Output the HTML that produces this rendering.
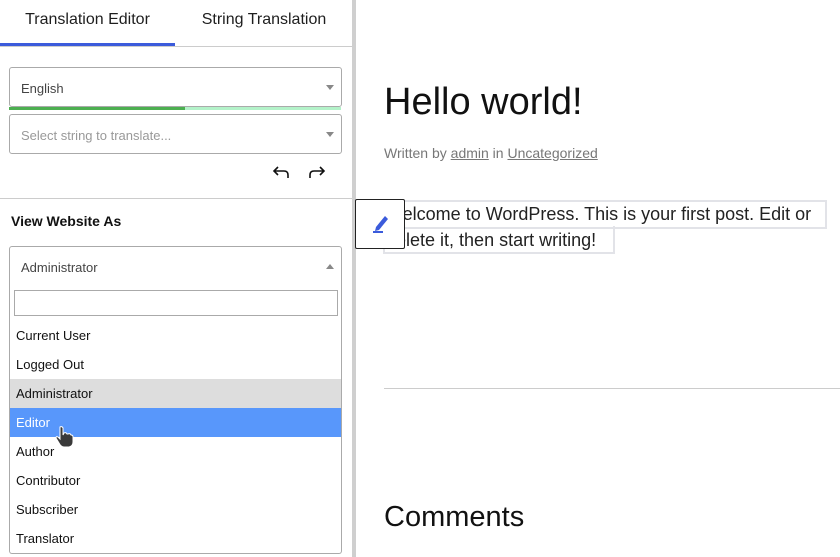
<!DOCTYPE html>
<html><head><meta charset="utf-8">
<style>
*{box-sizing:border-box;margin:0;padding:0}
body{width:840px;height:557px;overflow:hidden;background:#fff;font-family:"Liberation Sans",sans-serif;position:relative;color:#222}
.a{position:absolute}
.sel{position:absolute;left:9px;width:333px;border:1px solid #aaa;border-radius:3px;background:#fff;font-size:13px;color:#444}
.car{position:absolute;right:7px;top:50%;margin-top:-2px;width:0;height:0;border-left:4px solid transparent;border-right:4px solid transparent;border-top:5px solid #888}
.opt{position:absolute;left:0;width:331px;height:29px;line-height:29px;padding-left:6px;font-size:13px;color:#111}
.wp{font-family:"Liberation Sans",sans-serif;color:#111}
</style></head><body>
<div class="a" style="left:352px;top:0;width:4px;height:557px;background:#cfcfcf"></div>
<div class="a" style="left:0;top:11px;width:175px;text-align:center;font-size:16px;color:#1e1e1e">Translation Editor</div>
<div class="a" style="left:176px;top:11px;width:176px;text-align:center;font-size:16px;color:#1e1e1e">String Translation</div>
<div class="a" style="left:0;top:46px;width:352px;height:1px;background:#ccc"></div>
<div class="a" style="left:0;top:43px;width:175px;height:3px;background:#3b5bdb"></div>

<div class="sel" style="top:67px;height:40px"><span class="a" style="left:11px;top:13px">English</span><span class="car"></span></div>
<div class="a" style="left:9px;top:107px;width:176px;height:3px;background:#4caf50"></div>
<div class="a" style="left:185px;top:107px;width:156px;height:3px;background:#b3f2c9"></div>
<div class="sel" style="top:114px;height:40px"><span class="a" style="left:11px;top:13px;color:#999">Select string to translate...</span><span class="car"></span></div>

<svg class="a" style="left:271px;top:164px" width="20" height="16" viewBox="0 0 20 16" fill="none" stroke="#111" stroke-width="1.6"><path d="M7 3 L3 7 L7 11 M3 7 H13 Q17 7 17 11 V14"/></svg>
<svg class="a" style="left:307px;top:164px" width="20" height="16" viewBox="0 0 20 16" fill="none" stroke="#111" stroke-width="1.6"><path d="M13 3 L17 7 L13 11 M17 7 H7 Q3 7 3 11 V14"/></svg>

<div class="a" style="left:0;top:198px;width:352px;height:1px;background:#ccc"></div>
<div class="a" style="left:11px;top:213px;font-size:14px;font-weight:bold;color:#111">View Website As</div>

<div class="sel" style="top:246px;height:40px;border-radius:3px 3px 0 0"><span class="a" style="left:11px;top:13px">Administrator</span><span class="a" style="right:7px;top:17px;width:0;height:0;border-left:4px solid transparent;border-right:4px solid transparent;border-bottom:5px solid #888"></span></div>
<div class="a" style="left:9px;top:285px;width:333px;height:269px;border:1px solid #aaa;border-top:none;border-radius:0 0 3px 3px;background:#fff">
  <div class="a" style="left:4px;top:5px;width:324px;height:26px;border:1px solid #aaa"></div>
  <div class="opt" style="top:36px">Current User</div>
  <div class="opt" style="top:65px">Logged Out</div>
  <div class="opt" style="top:94px;background:#ddd">Administrator</div>
  <div class="opt" style="top:123px;background:#5897fb;color:#fff">Editor</div>
  <div class="opt" style="top:152px">Author</div>
  <div class="opt" style="top:181px">Contributor</div>
  <div class="opt" style="top:210px">Subscriber</div>
  <div class="opt" style="top:239px">Translator</div>
</div>
<svg class="a" style="left:54px;top:425px" width="22" height="24" viewBox="0 0 22 24"><path d="M6 2 Q8 1 9 3 V10 L10 8 Q12 7 13 9 L14 9 Q16 8 17 10 Q19 10 19 12 V17 Q19 21 15 22 H10 Q7 22 5 18 L2 13 Q2 11 4 12 L6 14 V3 Z" fill="#3a3a3a" stroke="#fff" stroke-width="1"/></svg>

<div class="a wp" style="left:384px;top:81px;font-size:38px;font-weight:300">Hello world!</div>
<div class="a wp" style="left:384px;top:145px;font-size:14px;color:#777">Written by <u>admin</u> in <u>Uncategorized</u></div>
<div class="a" style="left:383px;top:200px;width:444px;height:29px;border:2px solid #e2e3e8"></div>
<div class="a" style="left:383px;top:226px;width:232px;height:28px;border:2px solid #e2e3e8;border-top:none"></div>
<div class="a wp" style="left:386px;top:201px;font-size:18px;line-height:26px;font-weight:300;width:450px;color:#222">Welcome to WordPress. This is your first post. Edit or delete it, then start writing!</div>
<div class="a" style="left:355px;top:199px;width:50px;height:50px;background:#fff;border:1px solid #222;border-radius:2px"></div>
<svg class="a" style="left:371px;top:211px" width="20" height="24" viewBox="0 0 20 24"><path d="M5 16 L14 5 L17 8 L8 19 L4 20 Z" fill="#3b5bdb"/><rect x="2" y="20" width="10" height="2" fill="#3b5bdb"/></svg>

<div class="a" style="left:384px;top:388px;width:456px;height:1px;background:#ccc"></div>
<div class="a wp" style="left:384px;top:501px;font-size:29px;font-weight:300">Comments</div>
</body></html>
